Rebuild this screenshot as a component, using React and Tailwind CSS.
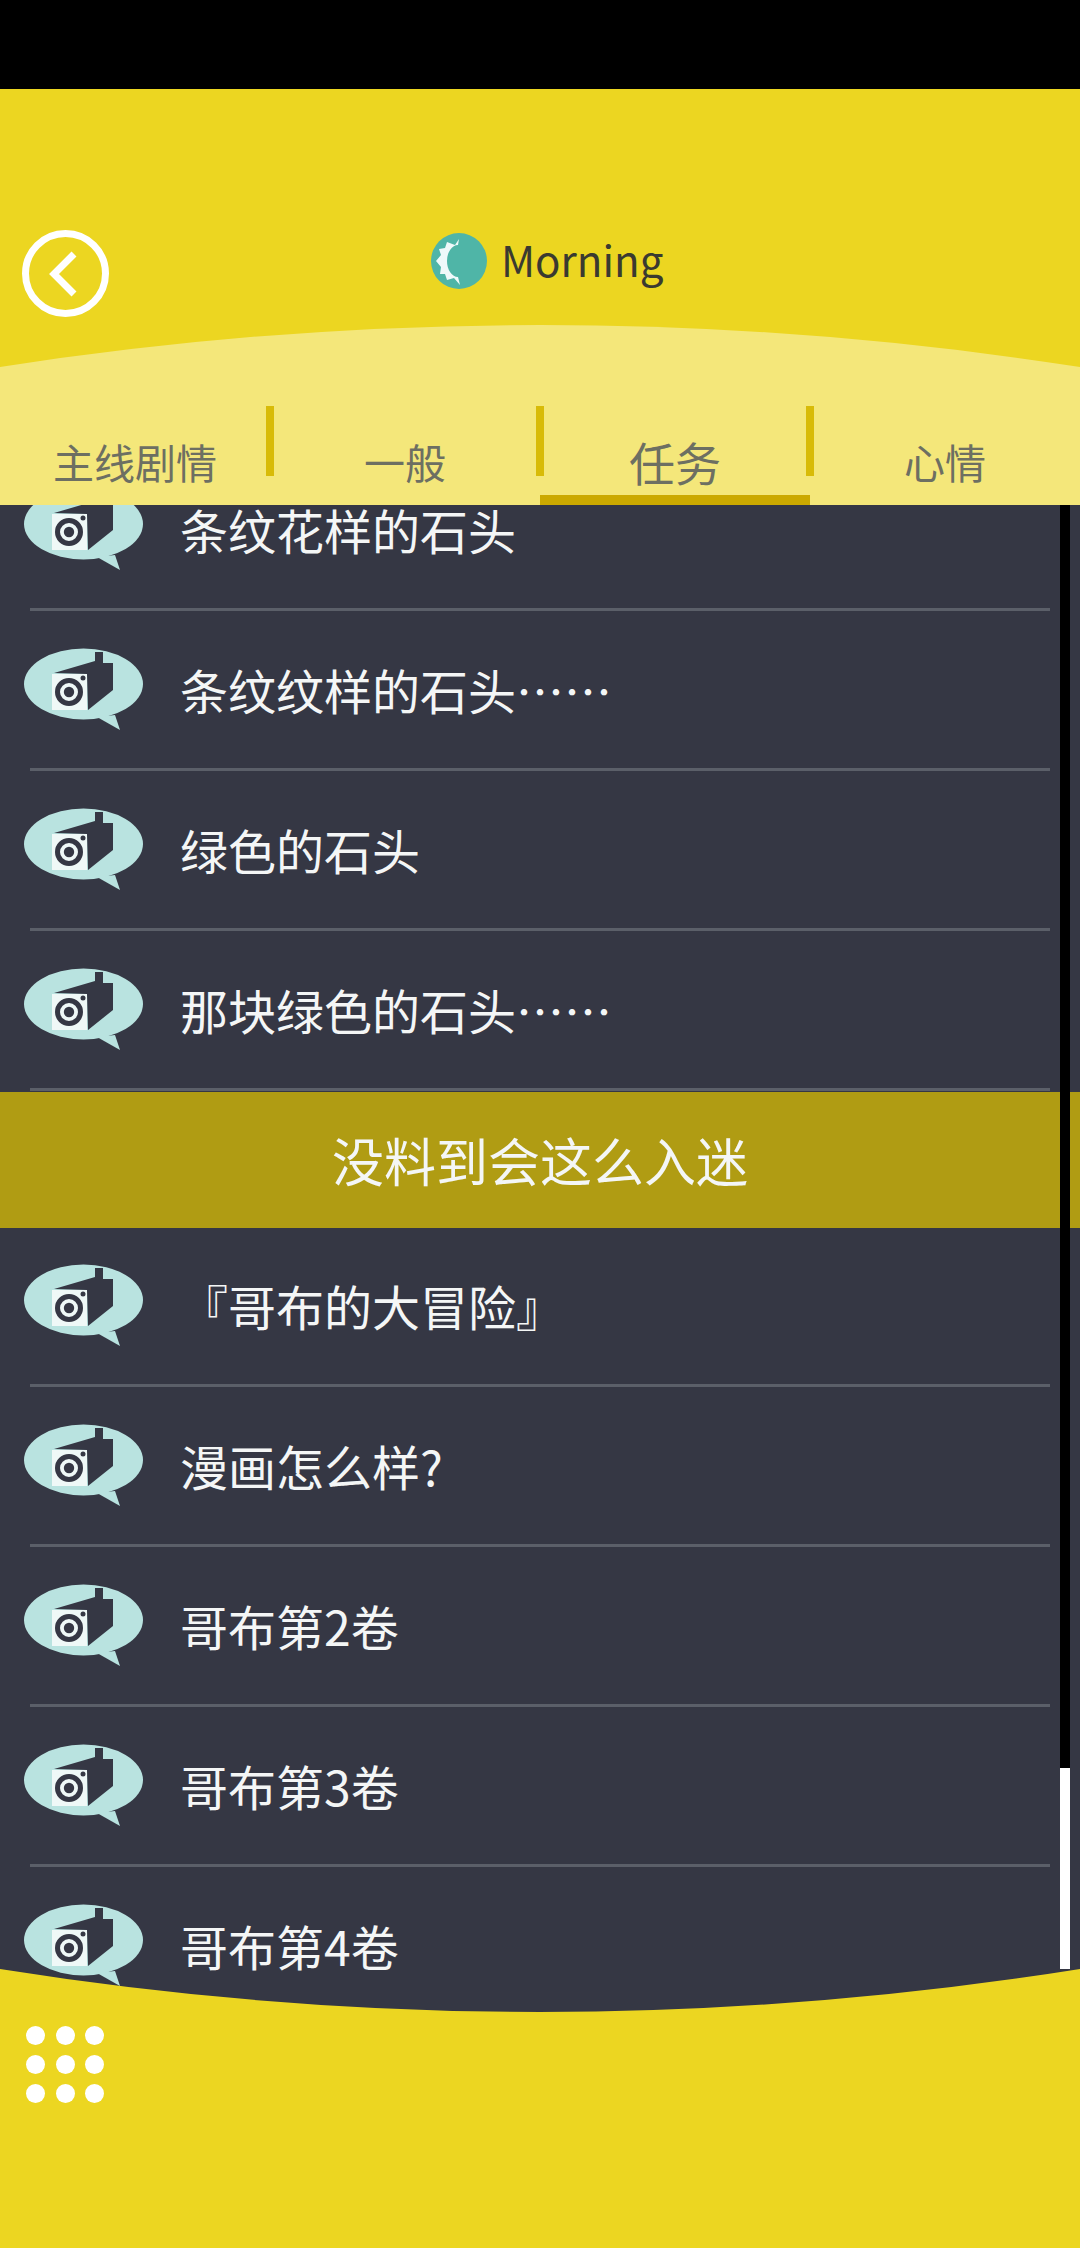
const CJK = "font-['Noto_Sans_CJK_SC','Noto_Sans',sans-serif]";

const TABS = [
  { label: "主线剧情" },
  { label: "一般" },
  { label: "任务", active: true },
  { label: "心情" },
];

const GROUP_ONE = ["条纹花样的石头", "条纹纹样的石头……", "绿色的石头", "那块绿色的石头……"];
const GROUP_TWO = ["『哥布的大冒险』", "漫画怎么样?", "哥布第2卷", "哥布第3卷", "哥布第4卷"];

function BubbleIcon() {
  return (
    <svg viewBox="0 0 120 84" className="block w-[120px] h-[84px] shrink-0">
      <path d="M73 69 L96 82 L91 67 Z" fill="#b9e3e0" />
      <ellipse cx="59.5" cy="36" rx="59.5" ry="35.5" fill="#b9e3e0" />
      <path d="M30 25 L71 13 L71 4 L79 4 L79 15 L89 15 L89 42 L64 62 L63 26 Z" fill="#353744" />
      <rect x="28" y="26" width="35" height="36" fill="#eff8f7" />
      <circle cx="45" cy="44" r="11.5" fill="none" stroke="#353744" strokeWidth="5" />
      <circle cx="45" cy="44" r="5.2" fill="#353744" />
      <circle cx="59" cy="30" r="2.5" fill="#353744" />
    </svg>
  );
}

function Row({ text }) {
  return (
    <div className="h-[160px] shrink-0">
      <div className="h-[157px] flex items-center pl-6">
        <div className="mt-[1px]">
          <BubbleIcon />
        </div>
        <span className="ml-[36px] -mt-[2px] text-[48px] leading-none text-[#f4f6f6] whitespace-nowrap">{text}</span>
      </div>
      <div className="h-[3px] mx-[30px] bg-[#5b5f69]" />
    </div>
  );
}

export default function App() {
  return (
    <div className={`w-[1080px] h-[2248px] flex flex-col overflow-hidden bg-[#ecd621] ${CJK}`}>
      <div className="h-[89px] bg-black shrink-0" />

      {/* header */}
      <div className="shrink-0">
        <div className="h-[236px] pt-[141px] pl-[22px] flex items-start">
          <div className="w-[87px] h-[87px] rounded-full border-[7px] border-white flex items-center justify-center shrink-0">
            <svg viewBox="0 0 30 50" className="w-[30px] h-[50px] -ml-[7px]">
              <path d="M27 5 L7 25 L27 45" fill="none" stroke="white" strokeWidth="7" />
            </svg>
          </div>
          <div className="ml-[322px] mt-[3px] flex items-center gap-[14px]">
            <svg viewBox="0 0 56 56" className="w-14 h-14 shrink-0">
              <circle cx="28" cy="28" r="28" fill="#4fb5a7" />
              <path d="M28 6 L24 12 L16 9 L14 15 L8 16 L10 22 L5 28 L10 34 L9 41 L14 41 L16 47 L23 45 L29 52 L27 44 A11 16 0 0 1 27 12 Z" fill="#eff9fa" />
            </svg>
            <span className="text-[42px] leading-none text-[#3a3a30] -mt-1">Morning</span>
          </div>
        </div>
        <svg viewBox="0 0 1080 42" preserveAspectRatio="none" className="block w-[1080px] h-[42px]">
          <path d="M0 42 Q540 -42 1080 42 Z" fill="#f4e77a" />
        </svg>
        <div className="h-[138px] bg-[#f4e77a] flex">
          {TABS.map((tab, i) => (
            <div key={tab.label} className="flex flex-1">
              {i > 0 && <div className="w-2 -mx-1 mt-[39px] h-[70px] bg-[#d8bb08] shrink-0" />}
              <div className="flex-1 flex flex-col">
                <div
                  className={`flex-1 flex items-center justify-center pt-[60px] text-[#6d6f62] leading-none ${
                    tab.active ? "text-[46px]" : "text-[41px]"
                  }`}
                >
                  {tab.label}
                </div>
                <div className={`h-[10px] ${tab.active ? "bg-[#cba900]" : ""}`} />
              </div>
            </div>
          ))}
        </div>
      </div>

      {/* list */}
      <div className="flex-1 min-h-0 relative bg-[#353744] overflow-hidden">
        <div className="-mt-[54px] flex flex-col">
          {GROUP_ONE.map((t) => (
            <Row key={t} text={t} />
          ))}
          <div className="mt-[1px] -mb-[1px] h-[136px] shrink-0 bg-[#b09c13] flex items-center justify-center text-[52px] leading-none text-[#f4f6f6]">
            没料到会这么入迷
          </div>
          {GROUP_TWO.map((t) => (
            <Row key={t} text={t} />
          ))}
        </div>
        {/* scrollbar */}
        <div className="absolute right-[10px] top-0 bottom-[43px] w-[10px] bg-black flex flex-col justify-end">
          <div className="h-[201px] bg-white" />
        </div>
      </div>

      {/* footer */}
      <div className="shrink-0 h-[236px] relative flex flex-col">
        <svg viewBox="0 0 1080 43" preserveAspectRatio="none" className="absolute left-0 -top-[43px] w-[1080px] h-[43px]">
          <path d="M0 0 Q540 86 1080 0 L1080 43 L0 43 Z" fill="#ecd621" />
        </svg>
        <div className="grid grid-cols-3 w-[78px] gap-y-[10px] gap-x-[10.5px] ml-[26px] mt-[14px]">
          {[...Array(9)].map((_, i) => (
            <div key={i} className="w-[19px] h-[19px] rounded-full bg-white" />
          ))}
        </div>
      </div>
    </div>
  );
}
